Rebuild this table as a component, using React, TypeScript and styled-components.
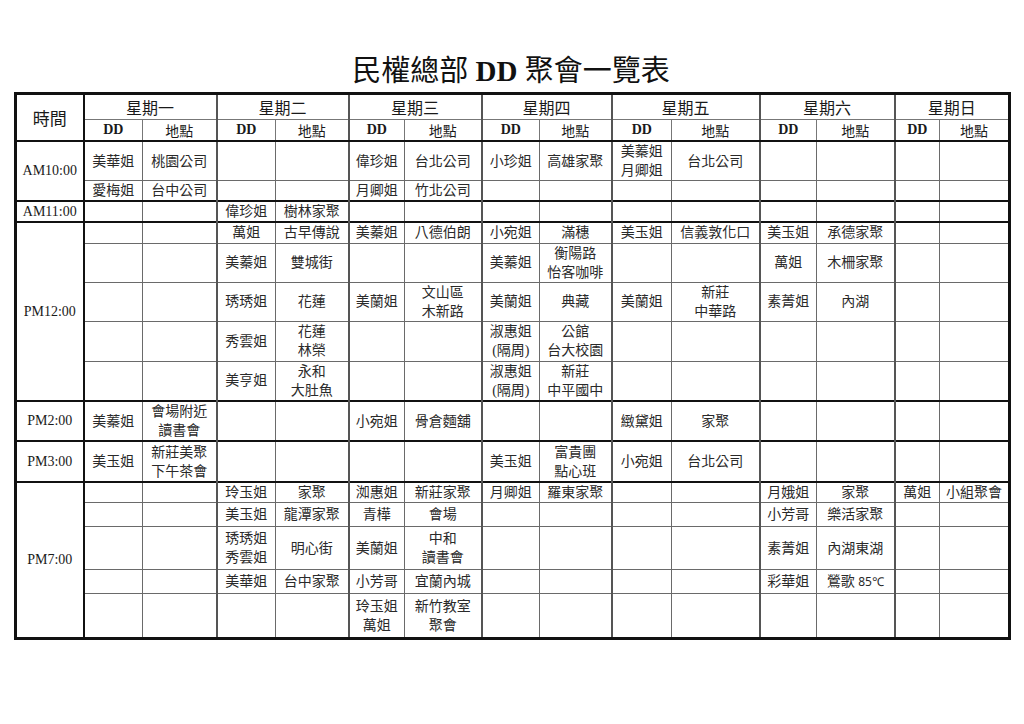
import React from 'react';
import styled, { createGlobalStyle } from 'styled-components';

const GlobalStyle = createGlobalStyle`
  body {
    margin: 0;
    background: #fff;
    font-family: "Liberation Serif", "Noto Sans CJK TC", serif;
    color: #222;
  }
`;

const Page = styled.div`
  width: 1024px;
  height: 724px;
  padding: 50px 0 0 14px;
  box-sizing: border-box;
`;

const Title = styled.h1`
  width: 994px;
  margin: 0;
  height: 42px;
  line-height: 42px;
  text-align: center;
  font-size: 29px;
  font-weight: 400;
  color: #111;
  white-space: pre;

  b {
    font-weight: 700;
  }
`;

const Table = styled.table`
  width: 994px;
  border-collapse: collapse;
  table-layout: fixed;
  border: 3px solid #111;
`;

const Row = styled.tr<{ $h: number }>`
  height: ${(p) => p.$h}px;
`;

const Cell = styled.td<{ $left?: boolean; $top?: boolean }>`
  padding: 0;
  text-align: center;
  vertical-align: middle;
  font-size: 14px;
  line-height: 19px;
  color: #2a2a2a;
  white-space: pre-line;
  border: 1px solid #6a6a6a;
  border-left: ${(p) => (p.$left ? '2px solid #555' : '1px solid #6a6a6a')};
  border-top: ${(p) => (p.$top ? '2px solid #111' : '1px solid #6a6a6a')};
`;

const TimeCell = styled.td<{ $head?: boolean }>`
  padding: 0;
  text-align: center;
  vertical-align: middle;
  font-size: ${(p) => (p.$head ? '17px' : '14px')};
  font-weight: 400;
  color: #1a1a1a;
  border-top: ${(p) => (p.$head ? 'none' : '2px solid #111')};
  border-bottom: ${(p) => (p.$head ? '2px solid #111' : 'none')};
  border-right: 2px solid #111;
`;

const DayHead = styled.th`
  font-size: 16px;
  font-weight: 400;
  padding: 0;
  color: #1a1a1a;
  border-left: 2px solid #555;
  border-bottom: 1px solid #777;
`;

const SubHead = styled.th<{ $bold?: boolean; $left?: boolean }>`
  font-size: 14px;
  font-weight: ${(p) => (p.$bold ? 700 : 400)};
  padding: 0;
  color: #1a1a1a;
  border-left: ${(p) => (p.$left ? '2px solid #555' : '1px solid #777')};
  border-bottom: 2px solid #111;
`;

const Sans = styled.span`
  font-family: "Noto Sans", "Liberation Sans", sans-serif;
  font-size: 12px;
`;

const widths = [68, 59, 74, 59, 73, 56, 77, 58, 72, 60, 88, 57, 78, 45, 70];
const days = ['星期一', '星期二', '星期三', '星期四', '星期五', '星期六', '星期日'];

type Group = { time: string; heights: number[]; rows: string[][] };

const E = ['', ''];

const groups: Group[] = [
  {
    time: 'AM10:00',
    heights: [39, 20],
    rows: [
      ['美華姐', '桃園公司', ...E, '偉珍姐', '台北公司', '小珍姐', '高雄家聚', '美蓁姐\n月卿姐', '台北公司', ...E, ...E],
      ['愛梅姐', '台中公司', ...E, '月卿姐', '竹北公司', ...E, ...E, ...E, ...E],
    ],
  },
  {
    time: 'AM11:00',
    heights: [21],
    rows: [[...E, '偉珍姐', '樹林家聚', ...E, ...E, ...E, ...E, ...E]],
  },
  {
    time: 'PM12:00',
    heights: [21, 38, 38, 40, 40],
    rows: [
      [...E, '萬姐', '古早傳說', '美蓁姐', '八德伯朗', '小宛姐', '滿穗', '美玉姐', '信義敦化口', '美玉姐', '承德家聚', ...E],
      [...E, '美蓁姐', '雙城街', ...E, '美蓁姐', '衡陽路\n怡客咖啡', ...E, '萬姐', '木柵家聚', ...E],
      [...E, '琇琇姐', '花蓮', '美蘭姐', '文山區\n木新路', '美蘭姐', '典藏', '美蘭姐', '新莊\n中華路', '素菁姐', '內湖', ...E],
      [...E, '秀雲姐', '花蓮\n林榮', ...E, '淑惠姐\n(隔周)', '公館\n台大校園', ...E, ...E, ...E],
      [...E, '美亨姐', '永和\n大肚魚', ...E, '淑惠姐\n(隔周)', '新莊\n中平國中', ...E, ...E, ...E],
    ],
  },
  {
    time: 'PM2:00',
    heights: [40],
    rows: [['美蓁姐', '會場附近\n讀書會', ...E, '小宛姐', '骨倉麵舖', ...E, '緻黛姐', '家聚', ...E, ...E]],
  },
  {
    time: 'PM3:00',
    heights: [41],
    rows: [['美玉姐', '新莊美聚\n下午茶會', ...E, ...E, '美玉姐', '富貴團\n點心班', '小宛姐', '台北公司', ...E, ...E]],
  },
  {
    time: 'PM7:00',
    heights: [20, 24, 43, 24, 45],
    rows: [
      [...E, '玲玉姐', '家聚', '洳惠姐', '新莊家聚', '月卿姐', '羅東家聚', ...E, '月娥姐', '家聚', '萬姐', '小組聚會'],
      [...E, '美玉姐', '龍潭家聚', '青樺', '會場', ...E, ...E, '小芳哥', '樂活家聚', ...E],
      [...E, '琇琇姐\n秀雲姐', '明心街', '美蘭姐', '中和\n讀書會', ...E, ...E, '素菁姐', '內湖東湖', ...E],
      [...E, '美華姐', '台中家聚', '小芳哥', '宜蘭內城', ...E, ...E, '彩華姐', '鶯歌 85℃', ...E],
      [...E, ...E, '玲玉姐\n萬姐', '新竹教室\n聚會', ...E, ...E, ...E, ...E],
    ],
  },
];

const renderText = (text: string) => {
  if (text.includes('85℃')) {
    return (
      <>
        鶯歌 <Sans>85℃</Sans>
      </>
    );
  }
  return text;
};

const App = () => {
  return (
    <>
      <GlobalStyle />
      <Page>
        <Title>
          民權總部 <b>DD</b> 聚會一覽表
        </Title>
        <Table>
          <colgroup>
            {widths.map((w, i) => (
              <col key={i} style={{ width: w }} />
            ))}
          </colgroup>
          <thead>
            <Row $h={24}>
              <TimeCell as="th" rowSpan={2} $head>
                時間
              </TimeCell>
              {days.map((d) => (
                <DayHead key={d} colSpan={2}>
                  {d}
                </DayHead>
              ))}
            </Row>
            <Row $h={20}>
              {days.map((d) => (
                <React.Fragment key={d}>
                  <SubHead $bold $left>
                    DD
                  </SubHead>
                  <SubHead>地點</SubHead>
                </React.Fragment>
              ))}
            </Row>
          </thead>
          <tbody>
            {groups.map((g) =>
              g.rows.map((cells, ri) => (
                <Row key={g.time + ri} $h={g.heights[ri]}>
                  {ri === 0 && <TimeCell rowSpan={g.rows.length}>{g.time}</TimeCell>}
                  {cells.map((c, ci) => (
                    <Cell key={ci} $left={ci % 2 === 0} $top={ri === 0}>
                      {renderText(c)}
                    </Cell>
                  ))}
                </Row>
              )),
            )}
          </tbody>
        </Table>
      </Page>
    </>
  );
};

export default App;
